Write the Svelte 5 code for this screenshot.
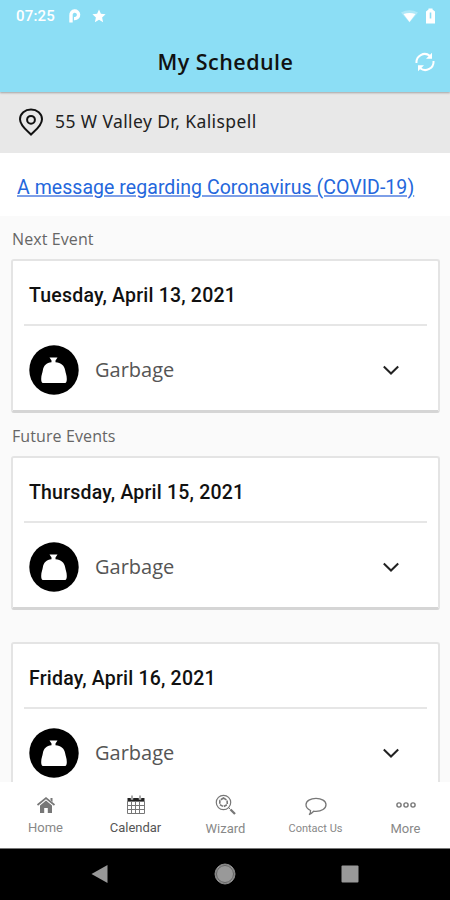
<script>
  const sections = [
    { label: "Next Event", events: [{ date: "Tuesday, April 13, 2021", type: "Garbage" }] },
    {
      label: "Future Events",
      events: [
        { date: "Thursday, April 15, 2021", type: "Garbage" },
        { date: "Friday, April 16, 2021", type: "Garbage" },
      ],
    },
  ];

  const tabs = [
    { name: "Home", icon: "home" },
    { name: "Calendar", icon: "calendar" },
    { name: "Wizard", icon: "wizard" },
    { name: "Contact Us", icon: "contact" },
    { name: "More", icon: "more" },
  ];
</script>

<div class="app">
  <header>
    <div class="status">
      <span class="time">07:25</span>
      <svg class="parking" width="12" height="14" viewBox="0 0 12 14">
        <path d="M2 13.500V6.200a3.800 3.800 0 1 1 3.800 3.400H5" fill="none" stroke="#fff" stroke-width="3.400" />
      </svg>
      <svg class="star" width="14" height="14" viewBox="0 0 14 14">
        <path d="M7 .5 8.900 4.800l4.700.5-3.500 3.200 1 4.700L7 10.800l-4.100 2.400 1-4.700L.4 5.300l4.700-.5z" fill="#fff" />
      </svg>
      <svg class="wifi" width="17" height="13" viewBox="0 0 17 13">
        <path d="M0 2.500Q8.500-2 17 2.500L8.500 12.500z" fill="#fff" opacity=".3" />
        <path d="M2.500 4Q8.500 2 14.500 4L8.500 12z" fill="#fff" />
      </svg>
      <svg width="9" height="16" viewBox="0 0 9 16">
        <path d="M0 3.500 2.500 1.500V.5h4v1L9 3.500V15.500H0z" fill="#fff" />
        <path d="M4.500 4.500v6" stroke="#8cdef5" stroke-width="1.600" />
      </svg>
    </div>
    <div class="title">
      <h1>My Schedule</h1>
      <button class="refresh" type="button" aria-label="Refresh">
        <svg width="20" height="20" viewBox="0 0 20 20" fill="none" stroke="#fff" stroke-width="2">
          <path d="M1.500 11a8.300 8.300 0 0 1 13.300-7.300M18.500 9a8.300 8.300 0 0 1-13.300 7.300" />
          <path d="M17 .8v6h-6zM3 19.200v-6h6z" fill="#fff" stroke="none" />
        </svg>
      </button>
    </div>
  </header>

  <div class="address">
    <svg width="26" height="30" viewBox="0 0 26 30" fill="none" stroke="#111" stroke-width="2">
      <path d="M13 28.500C10 25.500 2 20 2 13.300 2 7.500 7 3.500 13 3.500s11 4 11 9.800C24 20 16 25.500 13 28.500z" />
      <circle cx="13" cy="13.800" r="3.900" />
    </svg>
    <span>55 W Valley Dr, Kalispell</span>
  </div>

  <div class="message">
    <a href="#covid">A message regarding Coronavirus (COVID-19)</a>
  </div>

  <main>
    {#each sections as section}
      <h2>{section.label}</h2>
      {#each section.events as event}
        <article>
          <h3>{event.date}</h3>
          <div class="event">
            <svg width="50" height="50" viewBox="0 0 50 50">
              <circle cx="25" cy="25" r="24.700" fill="#000" />
              <path
                d="M20.500 12.500h8l-2 3v1.700c5.500.3 9 3.300 9.700 8.300.3 2.500 1.600 4.500 1.600 8.500 0 2.300-.4 4-1.800 4H14c-1.400 0-1.800-1.700-1.800-4 0-4 1.300-6 1.600-8.500.7-5 3.700-8 8.700-8.300v-1.700z"
                fill="#fff"
              />
            </svg>
            <span>{event.type}</span>
            <svg class="chevron" width="18" height="12" viewBox="0 0 18 12" fill="none" stroke="#222" stroke-width="2">
              <path d="m1.800 2.500 7.200 7 7.200-7" />
            </svg>
          </div>
        </article>
      {/each}
    {/each}
  </main>

  <nav class="tabs">
    {#each tabs as tab}
      <button type="button" class={tab.icon}>
        <svg width="22" height="22" viewBox="0 0 22 22" fill="none" stroke="currentColor">
          {#if tab.icon === "home"}
            <path d="M2.500 11 11 4l8.500 7" stroke-width="1.700" />
            <path d="M15.500 4h2v4l-2-1.700zM5 11.500l6-5 6 5V19h-4.200v-5H9.200v5H5z" fill="currentColor" stroke="none" />
          {:else if tab.icon === "calendar"}
            <path d="M2.500 4h17v4h-17z" fill="#222" stroke="none" />
            <path d="M7 1.500v4M15 1.500v4" stroke="#fff" stroke-width="2.400" />
            <path d="M7 1.500v3.500M15 1.500v3.500" stroke="#555" />
            <path d="M2.500 7.500h17v12h-17zM3 11.500h16M3 15.500h16M6.500 8v11M10.500 8v11M14.500 8v11" />
          {:else if tab.icon === "wizard"}
            <circle cx="8.500" cy="8.500" r="7.200" stroke-width="1.200" />
            <path d="m8.500 4 3.600 2.300.2 4.200-3.800 2.200-3.800-2.200.2-4.200z" stroke-width="1.600" stroke-dasharray="3.500 1" />
            <path d="m13.500 13.500 1.800 1.800" />
            <path d="m15.500 15.500 4.500 4.500" stroke-width="2.300" />
          {:else if tab.icon === "contact"}
            <path
              d="M4 20.500c1.500-1 1.700-2.400 1.500-4C2.700 15.200 1 13.200 1 10.800 1 7 5.500 4.300 11 4.300s10 2.700 10 6.500-4.500 6.600-10 6.600c-.8 0-1.600 0-2.300-.2-1.200 1.300-2.900 2.800-4.700 3.300z"
              stroke-width="1.300"
            />
          {:else}
            <circle cx="4" cy="11" r="2.100" stroke-width="1.400" />
            <circle cx="11" cy="11" r="2.100" stroke-width="1.400" />
            <circle cx="18" cy="11" r="2.100" stroke-width="1.400" />
          {/if}
        </svg>
        <span>{tab.name}</span>
      </button>
    {/each}
  </nav>

  <footer>
    <svg width="18" height="20" viewBox="0 0 18 20"><path d="M16.500 1v18L.5 10z" fill="#989898" /></svg>
    <svg width="22" height="22" viewBox="0 0 22 22">
      <circle cx="11" cy="11" r="10" fill="#999" stroke="#888" />
      <circle cx="11" cy="11" r="8.500" fill="none" stroke="#555" stroke-width=".8" />
    </svg>
    <svg width="18" height="18" viewBox="0 0 18 18"><rect width="17" height="17" x=".5" y=".5" rx="1" fill="#999" /></svg>
  </footer>
</div>

<style>
  :global(body) {
    margin: 0;
    overflow: hidden;
  }

  .app {
    height: 900px;
    display: flex;
    flex-direction: column;
    background: #fafafa;
    font-family: "Open Sans", sans-serif;
    overflow: hidden;
  }

  svg {
    display: block;
    flex: none;
  }

  h1,
  h2,
  h3 {
    margin: 0;
  }

  button {
    border: none;
    padding: 0;
    background: none;
    font: inherit;
  }

  header {
    flex: none;
    height: 92px;
    background: #8cdef5;
    box-shadow: 0 1px 2px rgba(0, 0, 0, 0.3);
    z-index: 1;
  }

  .status {
    display: flex;
    align-items: center;
    height: 32px;
    padding: 0 15px 0 16px;
    color: #fff;
  }

  .time {
    width: 53px;
    font-family: Roboto, sans-serif;
    font-size: 15px;
    font-weight: 500;
    letter-spacing: 0.2px;
  }

  .star {
    margin-left: 11px;
  }

  .wifi {
    margin-left: auto;
    margin-right: 8px;
  }

  .title {
    display: grid;
    grid-template-columns: 1fr auto 1fr;
    align-items: center;
    height: 60px;
    padding-right: 15px;
  }

  h1 {
    grid-column: 2;
    margin: 0 0 2px 16px;
    font-size: 21.5px;
    font-weight: 600;
    letter-spacing: 0.45px;
    color: #111;
  }

  .refresh {
    justify-self: end;
  }

  .address {
    flex: none;
    display: flex;
    align-items: center;
    gap: 11px;
    height: 61px;
    box-sizing: border-box;
    padding: 0 18px 4px;
    background: #e8e8e8;
    color: #222;
    font-family: "Noto Sans", sans-serif;
    font-size: 17.5px;
    letter-spacing: 0.4px;
  }

  .message {
    flex: none;
    height: 63px;
    padding: 0 17px;
    background: #fff;
    font-family: Roboto, sans-serif;
    font-size: 19.5px;
    line-height: 70px;
    letter-spacing: 0.05px;
    white-space: nowrap;
  }

  .message a {
    color: #2467dc;
    text-decoration-color: #7d9fe8;
    text-decoration-thickness: 2px;
    text-underline-offset: 1px;
  }

  main {
    flex: 1;
    min-height: 0;
    padding: 0 10px 0 11px;
    overflow: hidden;
  }

  h2 {
    height: 43px;
    padding-left: 1px;
    font-size: 16px;
    font-weight: 400;
    line-height: 46px;
    letter-spacing: 0.1px;
    color: #666;
  }

  article {
    height: 154px;
    box-sizing: border-box;
    border: 2px solid #e4e4e4;
    border-bottom: 3px solid #d5d5d5;
    border-radius: 3px;
    padding: 0 11px;
    background: #fff;
  }

  article + article {
    margin-top: 32px;
  }

  h3 {
    height: 65px;
    border-bottom: 2px solid #e6e6e6;
    padding-left: 5px;
    box-sizing: border-box;
    font-family: Roboto, sans-serif;
    font-size: 19.5px;
    font-weight: 500;
    line-height: 70px;
    letter-spacing: 0.2px;
    color: #111;
  }

  .event {
    display: flex;
    align-items: center;
    height: 87px;
    padding: 0 27px 0 5px;
  }

  .event span {
    margin-left: 16px;
    font-size: 20px;
    color: #555;
  }

  .chevron {
    margin-left: auto;
  }

  .tabs {
    flex: none;
    display: grid;
    grid-template-columns: repeat(5, 1fr);
    height: 67px;
    border-bottom: 1px solid #777;
    box-sizing: border-box;
    background: #fff;
  }

  .tabs button {
    display: flex;
    flex-direction: column;
    align-items: center;
    padding: 12px 0 0 1px;
    color: #777;
    font-family: Roboto, sans-serif;
    font-size: 13px;
  }

  .tabs span {
    height: 24px;
    line-height: 24px;
    color: #888;
  }

  .tabs .calendar span {
    color: #555;
  }

  .tabs .wizard span,
  .tabs .more span {
    line-height: 26px;
  }

  .tabs .contact span {
    font-size: 11px;
    line-height: 25px;
  }

  footer {
    flex: none;
    display: flex;
    align-items: center;
    justify-content: space-between;
    height: 51px;
    box-sizing: border-box;
    padding: 0 91px 1px;
    background: #000;
  }
</style>
